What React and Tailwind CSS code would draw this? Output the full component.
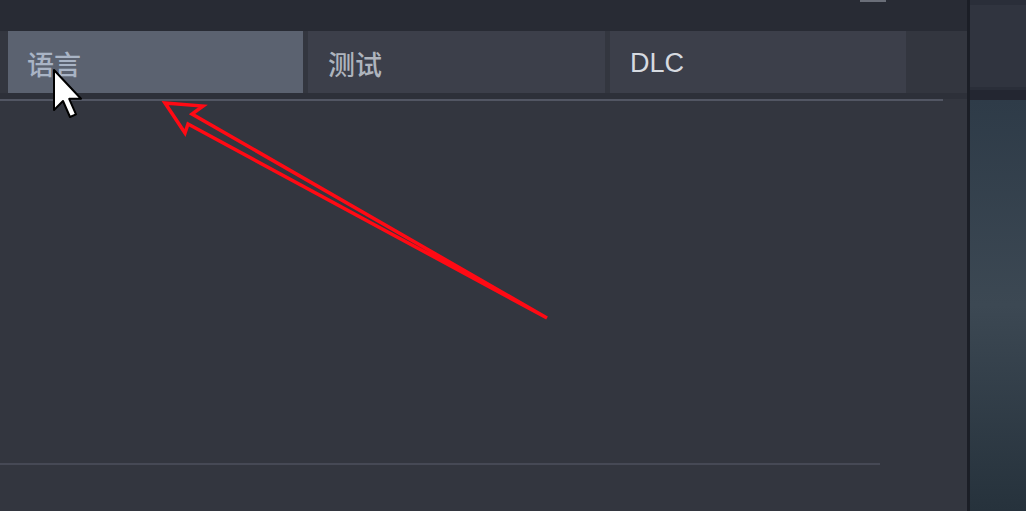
export default function App() {
  const font = { fontFamily: '"Noto Sans CJK SC", "Liberation Sans", sans-serif' };
  return (
    <div className="relative w-[1026px] h-[511px] overflow-hidden flex bg-[#33363f]" style={font}>
      {/* left main */}
      <div className="w-[967px] h-full flex flex-col bg-[#33363f]">
        <div className="h-[31px] bg-[#282b34] relative">
          <div className="absolute left-[860px] top-0 w-[26px] h-[2px] bg-[#6a6e78]" />
        </div>
        <div className="flex pl-[8px] gap-[5px] h-[62px]">
          <div className="w-[295px] h-full bg-[#5b6270] flex items-center pl-[19px] pt-[2px] text-[27px] font-medium text-[#a9b4c5] leading-none">语言</div>
          <div className="w-[297px] h-full bg-[#3c3f4a] flex items-center pl-[20px] pt-[2px] text-[27px] font-medium text-[#aeb4bd] leading-none">测试</div>
          <div className="w-[296px] h-full bg-[#3c3f4a] flex items-center pl-[20px] pt-[3px] text-[27px] text-[#d6dae0] leading-none" style={{ fontFamily: '"Liberation Sans", sans-serif' }}>DLC</div>
        </div>
        <div className="h-[6px] bg-[#2d3039]" />
        <div className="w-[943px] h-[2px] bg-[#525663]" />
        <div className="flex-1 flex flex-col">
          <div className="h-[362px]" />
          <div className="w-[880px] h-[2px] bg-[#464955]" />
        </div>
      </div>
      {/* separator */}
      <div className="w-[3px] h-full bg-[#1b1e26]" />
      {/* right panel */}
      <div className="flex-1 h-full flex flex-col">
        <div className="h-[90px] bg-[#2a2e39] pt-[5px]">
          <div className="h-[82px] bg-[#30343f]" />
        </div>
        <div className="h-[10px] bg-[#232631]" />
        <div className="flex-1 bg-gradient-to-b from-[#2e3b48] via-[#3c4853] to-[#26323c]" />
      </div>

      {/* red annotation arrow */}
      <svg className="absolute left-0 top-0 pointer-events-none" width="1026" height="511">
        <polygon
          points="165,103 203,106 192,114 547,318 188,124 185,133"
          fill="none"
          stroke="#ff0a14"
          strokeWidth="3.5"
          strokeLinejoin="miter"
        />
      </svg>

      {/* mouse cursor */}
      <svg className="absolute left-[52px] top-[68px] pointer-events-none" width="34" height="56" viewBox="0 0 17 28">
        <path d="M1 1 L1 21 L5.5 16.5 L9 24.5 L12 23.2 L8.6 15.4 L14.5 15.4 Z" fill="#ffffff" stroke="#000000" strokeWidth="1" strokeLinejoin="round" />
      </svg>
    </div>
  );
}
